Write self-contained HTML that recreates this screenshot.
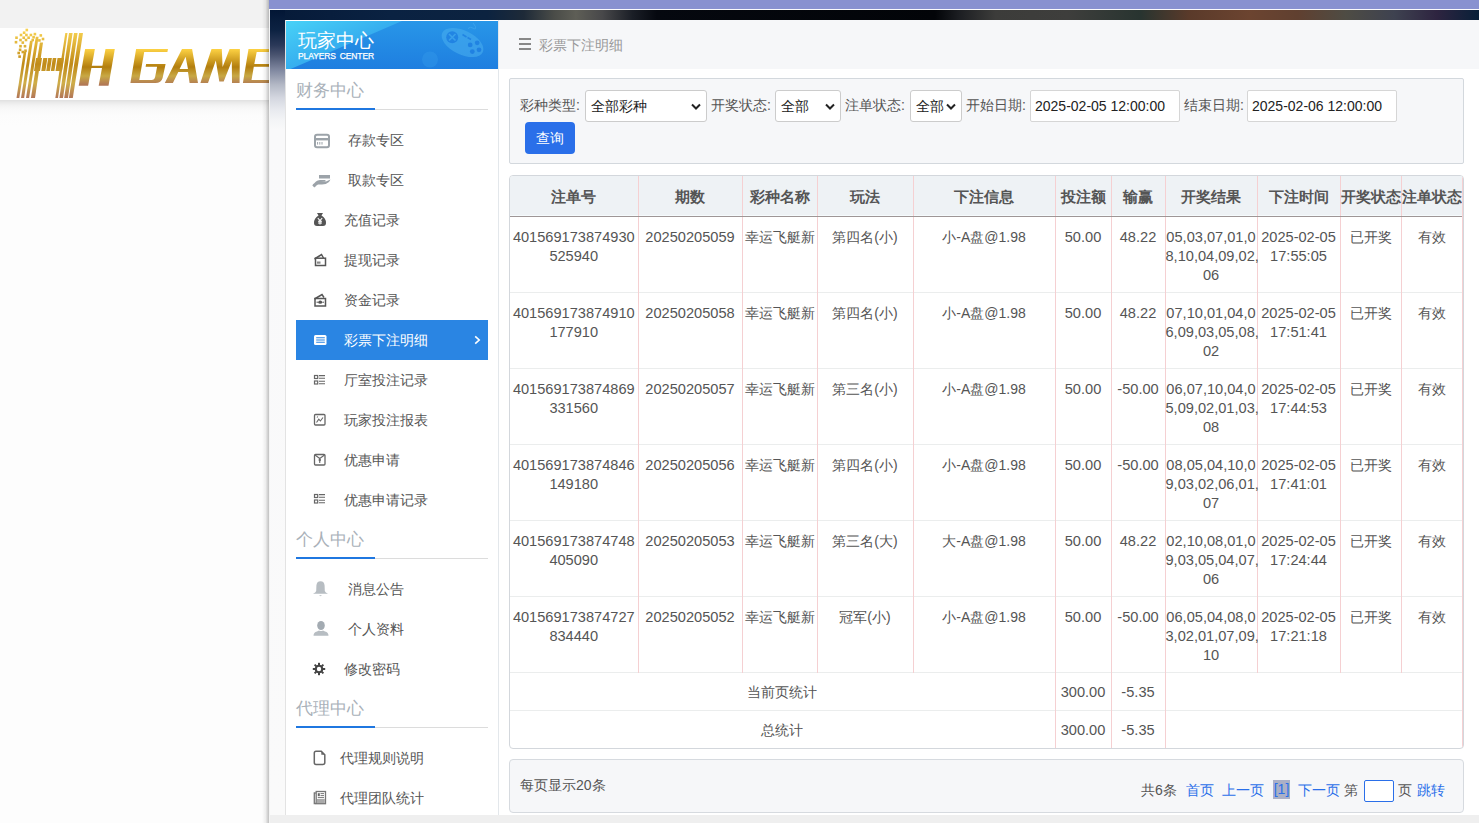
<!DOCTYPE html>
<html><head><meta charset="utf-8">
<style>
*{box-sizing:border-box;margin:0;padding:0}
html,body{width:1479px;height:823px;overflow:hidden}
body{position:relative;background:#fdfdfd;font-family:"Liberation Sans",sans-serif;font-size:14px;color:#555}
.abs{position:absolute}
/* left page */
#topband{left:0;top:0;width:270px;height:28px;background:#f2f2f2}
#logoband{left:0;top:28px;width:270px;height:72px;background:#fff}
#logoshadow{left:0;top:100px;width:270px;height:25px;background:linear-gradient(#e0e0e0 0px,#ececec 3px,#f4f4f4 6px,#f9f9f9 10px,#fcfcfc 16px,#fdfdfd 25px)}
#leftshadow{left:262px;top:0;width:7px;height:823px;background:linear-gradient(90deg,rgba(0,0,0,0),rgba(0,0,0,.06) 50%,rgba(0,0,0,.24))}
/* window */
#win{left:269px;top:0;width:1210px;height:823px;background:#f4f4f4}
#purple{left:269px;top:0;width:1210px;height:9px;background:#8891d0}
#wline{left:269px;top:9px;width:1210px;height:1px;background:#fafafc}
#dark{left:270px;top:10px;width:1209px;height:10px;background:linear-gradient(90deg,#061a38 0%,#0a2242 10%,#0c2340 18%,#1e2a38 21%,#4a4c48 23.5%,#5e5e56 25.3%,#48484a 27.5%,#1a1e26 30%,#05080f 32%,#020408 55%,#1c1e22 57%,#3c3c3a 60%,#3e3e3c 66%,#283430 72%,#5a3a2a 76%,#6c4430 81%,#604030 85%,#4e4c44 89%,#3e4250 93%,#2e2440 96.5%,#082038 100%)}
#gutter{left:270px;top:10px;width:15px;height:805px;background:linear-gradient(#021635 0px,#0c2242 20px,#2a3858 35px,#4a5470 45px,#8088a0 60px,#b4b9c6 75px,#d4d7e0 88px,#e8eaef 100px,#f3f4f6 110px,#f9f9fa 120px,#fafafa 805px)}
#bottomstrip{left:270px;top:815px;width:1209px;height:8px;background:#efefef}
/* sidebar */
#side{left:285px;top:20px;width:214px;height:795px;background:#fff;border-left:1px solid #e3e3e3;border-right:1px solid #e3e7eb}
#sidehead{left:286px;top:21px;width:212px;height:48px;background:linear-gradient(180deg,#2896e8 0%,#2288e3 60%,#1f7ee0 100%);overflow:hidden}
.sect{position:absolute;left:296px;width:192px;height:40px}
.sect .t{position:absolute;left:0;top:0;font-size:17px;color:#a9b1b9;line-height:20px}
.sect .l{position:absolute;left:0;top:28px;width:192px;height:1px;background:#dcdcdc}
.sect .b{position:absolute;left:0;top:27px;width:79px;height:2px;background:#1f77e0}
.item{position:absolute;left:296px;width:192px;height:40px;line-height:40px;font-size:14px;color:#555}
.item .ic{position:absolute;left:17px;top:12px;width:18px;height:16px}
.item .tx{position:absolute;left:48px;top:0}
.item.act{background:#2a85e3;color:#fff}
/* main */
#mhead{left:499px;top:20px;width:980px;height:49px;background:#f6f7f9}
#mbody{left:499px;top:69px;width:980px;height:746px;background:#fff}
#filter{left:509px;top:78px;width:955px;height:86px;background:#f6f7f9;border:1px solid #d3d8dd;border-radius:2px}
.lbl{position:absolute;top:97px;font-size:14px;color:#555;line-height:17px}
.sel{position:absolute;top:90px;height:32px;background:#fff;border:1px solid #ccc;border-radius:3px;color:#222;font-size:14px;line-height:30px;padding-left:5px}
.sel svg{position:absolute;right:5px;top:12px}
.inp{position:absolute;top:90px;height:32px;background:#fff;border:1px solid #d6d6d6;border-radius:2px;color:#222;font-size:14px;line-height:30px;padding-left:4px}
#btn{left:525px;top:122px;width:50px;height:32px;background:#2a6fe9;border-radius:4px;color:#fff;font-size:14px;line-height:32px;text-align:center}
/* table */
#tbl{left:509px;top:175px;width:955px;height:574px;border:1px solid #d3d7dc;border-radius:4px;overflow:hidden}
table{border-collapse:collapse;table-layout:fixed;width:953px}
td,th{text-align:center;vertical-align:top;border-left:1px solid #f5d0d2;padding:0;line-height:19px}
td:first-child,th:first-child{border-left:none}
th{height:40px;background:#eef2f5;font-weight:bold;font-size:15px;color:#555;vertical-align:middle;padding-top:2px;border-bottom:1px solid #9e9696;box-shadow:inset 0 -1px 0 #f6fbfd}
tr.r td{height:76px;border-top:1px solid #ebeded;padding-top:11px}
tr.r:first-child td{border-top:none}
tr.s td{height:38px;border-top:1px solid #ebeded;vertical-align:middle;padding-top:3px}
.n{font-size:14.6px}
/* pager */
#pager{left:509px;top:759px;width:955px;height:54px;background:#f6f7f9;border:1px solid #d6dadf;border-radius:4px}
.pg{position:absolute;top:782px;font-size:14px;line-height:17px;color:#555}
.lk{color:#2a6fe9}
</style></head><body>
<div class="abs" id="topband"></div>
<div class="abs" id="logoband"></div>
<div class="abs" id="logoshadow"></div>
<!-- logo -->
<svg class="abs" style="left:0;top:0" width="269" height="100" viewBox="0 0 269 100"><defs><linearGradient id="g1" gradientUnits="userSpaceOnUse" x1="0" y1="30" x2="0" y2="98"><stop offset="0" stop-color="#f8d250"/><stop offset="0.5" stop-color="#c08a18"/><stop offset="0.78" stop-color="#cfae48"/><stop offset="1" stop-color="#b27658"/></linearGradient>
<linearGradient id="g2" gradientUnits="userSpaceOnUse" x1="0" y1="49" x2="0" y2="85"><stop offset="0" stop-color="#fdd243"/><stop offset="0.5" stop-color="#b37e0e"/><stop offset="0.75" stop-color="#c8a844"/><stop offset="1" stop-color="#b07656"/></linearGradient></defs><g fill="url(#g1)"><polygon points="23.7,52 26.3,52 19.3,98 16.5,98"/><polygon points="30,40.8 32.8,40.8 24.1,98 21,98"/><polygon points="35.8,36.8 38.6,36.8 29.1,98 26,98"/><polygon points="39.9,42.6 43,42.6 35,98 30.9,98"/><polygon points="43.3,58 47.4,58 45.4,71 41.3,71"/><polygon points="48.2,58 51.9,58 49.9,71 46.2,71"/><polygon points="52.8,58 56.4,58 54.4,71 50.8,71"/><polygon points="36,58 42,58 40,71 34,71"/><polygon points="57.5,58 64,58 62,71 55.5,71"/><polygon points="65.3,33 67.5,33 58,98 55.3,98"/><polygon points="69,33 72.6,33 63,98 59.4,98"/><polygon points="74,33 77.6,33 68,98 64.2,98"/><polygon points="79.1,33 83,33 72.8,98 68.9,98"/><rect x="25.5" y="28.7" width="2.6" height="2.6"/><rect x="22.8" y="31.4" width="2.6" height="2.6"/><rect x="19.7" y="33.7" width="2.6" height="2.6"/><rect x="25.1" y="33.7" width="2.6" height="2.6"/><rect x="29.6" y="33.7" width="2.6" height="2.6"/><rect x="33.6" y="32.8" width="2.6" height="2.6"/><rect x="39.5" y="34.1" width="2.6" height="2.6"/><rect x="15.2" y="36.4" width="2.6" height="2.6"/><rect x="22.4" y="36.4" width="2.6" height="2.6"/><rect x="27.3" y="36.4" width="2.6" height="2.6"/><rect x="32.3" y="35.9" width="2.6" height="2.6"/><rect x="41.7" y="37.7" width="2.6" height="2.6"/><rect x="19.2" y="38.7" width="2.6" height="2.6"/><rect x="24.7" y="38.7" width="2.6" height="2.6"/><rect x="31.4" y="38.7" width="2.6" height="2.6"/><rect x="38.1" y="39.1" width="2.6" height="2.6"/><rect x="14.7" y="40.9" width="2.6" height="2.6"/><rect x="21.5" y="41.3" width="2.6" height="2.6"/><rect x="19.2" y="44.9" width="2.6" height="2.6"/><rect x="23.7" y="44.9" width="2.6" height="2.6"/><rect x="18.8" y="48.5" width="2.6" height="2.6"/><rect x="17.4" y="51.7" width="2.6" height="2.6"/><rect x="24.2" y="49.4" width="2.6" height="2.6"/><rect x="21.5" y="50.7" width="2.6" height="2.6"/><rect x="18.3" y="55.3" width="2.6" height="2.6"/></g><g fill="url(#g2)"><polygon points="85.1,49 94.9,49 88.1,85.7 78.7,85.7"/><polygon points="105.5,49 114.8,49 108.5,85.7 98.7,85.7"/><polygon points="91,65.7 109,65.7 108.6,67.9 90.6,67.9"/><path d="M136.1,49 L168,49 L167.4,52 L144.2,52 L139.3,80 L151.5,80 Q154.6,80 155.2,76.5 L157.1,66.8 L145.6,66.8 L146.1,64.1 L165.6,64.1 L162.6,78 Q161.3,83 155.3,83 L130.4,83 Z"/><path d="M164.8,83 L182,49 L192.1,49 L198,83 L189.6,83 L188,71.9 L178.3,71.9 L172.9,83 Z M185.6,56.7 L179.6,69.1 L188,69.1 Z" fill-rule="evenodd"/><polygon points="200.4,83 211.5,49 221.8,49 222.6,67 229.6,49 239.9,49 239.6,83 232,83 231.8,61 223.7,81.6 219.3,81.6 215.8,60.5 208,83"/><polygon points="248.5,49 270,49 270,52 256.7,52 254.3,64.1 270,64.1 270,66.7 253.8,66.7 251.5,80 270,80 270,83 242.9,83"/></g></svg>
<div class="abs" id="leftshadow"></div>
<div class="abs" id="win"></div>
<div class="abs" id="purple"></div>
<div class="abs" id="wline"></div>
<div class="abs" id="dark"></div>
<div class="abs" id="gutter"></div>
<div class="abs" id="bottomstrip"></div>

<!-- SIDEBAR -->
<div class="abs" id="side"></div>
<div class="abs" id="sidehead">
 <svg style="position:absolute;left:0;top:0" width="212" height="48" viewBox="0 0 212 48"><defs><linearGradient id="hb" x1="0" y1="0" x2="1" y2="1"><stop offset="0" stop-color="#48d2f7"/><stop offset="0.55" stop-color="#34aaee"/><stop offset="1" stop-color="#2c9aea"/></linearGradient></defs><polygon points="0,0 116,0 0,50" fill="url(#hb)"/></svg>
 <svg style="position:absolute;left:0;top:0" width="212" height="48" viewBox="286 21 212 48"><g opacity="0.55"><ellipse cx="462.5" cy="42.5" rx="22.5" ry="12" transform="rotate(26 462.5 42.5)" fill="#4ab0f0"/><circle cx="452.2" cy="37.3" r="6" fill="#1f7de2"/><path d="M449 34 L455.5 40.5 M455.5 34 L449 40.5" stroke="#4ab0f0" stroke-width="1.6"/><circle cx="470.2" cy="44.9" r="2.4" fill="#1f7de2"/><circle cx="477.2" cy="42.8" r="2.4" fill="#1f7de2"/><circle cx="472.3" cy="51.6" r="2.4" fill="#1f7de2"/><circle cx="479" cy="49.8" r="2.4" fill="#1f7de2"/><path d="M462.5 34.5 L466.5 37 M467.5 37.5 L471 39.5" stroke="#1f7de2" stroke-width="1.6"/><path d="M468 28.5 Q470 26 474 28.5 Q476 30 475.5 26.5 L473 23" fill="none" stroke="#4ab0f0" stroke-width="1"/><circle cx="430" cy="59.5" r="8" fill="#3aa2ee" opacity="0.6"/></g></svg>
 <div style="position:absolute;left:12px;top:9px;color:#fff;font-size:19px;line-height:22px">玩家中心</div>
 <div style="position:absolute;left:12px;top:30px;color:#fff;font-size:8.5px;font-weight:normal;-webkit-text-stroke:0.25px #fff;line-height:10px;letter-spacing:-0.1px;word-spacing:1.5px">PLAYERS CENTER</div>
</div>
<div class="sect" style="top:81px"><div class="t">财务中心</div><div class="l"></div><div class="b"></div></div>
<div class="item" style="top:120px"><span class="ic"></span><span class="tx" style="left:52px">存款专区</span></div>
<div class="item" style="top:160px"><span class="ic"></span><span class="tx" style="left:52px">取款专区</span></div>
<div class="item" style="top:200px"><span class="ic"></span><span class="tx">充值记录</span></div>
<div class="item" style="top:240px"><span class="ic"></span><span class="tx">提现记录</span></div>
<div class="item" style="top:280px"><span class="ic"></span><span class="tx">资金记录</span></div>
<div class="item act" style="top:320px"><span class="ic"></span><span class="tx">彩票下注明细</span><svg style="position:absolute;left:178px;top:15px" width="7" height="11" viewBox="0 0 7 11"><path d="M1.2 1.3 L5.2 5 L1.2 8.7" fill="none" stroke="#fff" stroke-width="1.6"/></svg></div>
<div class="item" style="top:360px"><span class="ic"></span><span class="tx">厅室投注记录</span></div>
<div class="item" style="top:400px"><span class="ic"></span><span class="tx">玩家投注报表</span></div>
<div class="item" style="top:440px"><span class="ic"></span><span class="tx">优惠申请</span></div>
<div class="item" style="top:480px"><span class="ic"></span><span class="tx">优惠申请记录</span></div>
<div class="sect" style="top:530px"><div class="t">个人中心</div><div class="l"></div><div class="b"></div></div>
<div class="item" style="top:569px"><span class="ic"></span><span class="tx" style="left:52px">消息公告</span></div>
<div class="item" style="top:609px"><span class="ic"></span><span class="tx" style="left:52px">个人资料</span></div>
<div class="item" style="top:649px"><span class="ic"></span><span class="tx">修改密码</span></div>
<div class="sect" style="top:699px"><div class="t">代理中心</div><div class="l"></div><div class="b"></div></div>
<div class="item" style="top:738px"><span class="ic"></span><span class="tx" style="left:44px">代理规则说明</span></div>
<div class="item" style="top:778px"><span class="ic"></span><span class="tx" style="left:44px">代理团队统计</span></div>

<!-- icons -->
<svg class="abs" style="left:313px;top:133px" width="18" height="16" viewBox="0 0 18 16"><rect x="2" y="1.8" width="14" height="12.4" rx="2" fill="none" stroke="#9ca3a9" stroke-width="2"/><rect x="2" y="5" width="14" height="2.4" fill="#9ca3a9"/><path d="M4.6 9v2.6M6.8 9v2.6M9 9v2.6" stroke="#9ca3a9" stroke-width="1"/></svg>
<svg class="abs" style="left:312px;top:174px" width="20" height="14" viewBox="0 0 20 14"><rect x="7" y="1" width="11" height="3.5" fill="#9ca3a9"/><path d="M1 10.5 L4 7.5 Q5.5 6 8 6 L13 6 Q14 6.2 13.5 7.2 L9 7.5 L14 7.5 L18.5 5.5 L17 8 Q14 10.5 10 10.5 L6 10.5 L3 12.5 Z" fill="#9ca3a9"/><path d="M1 10.5 L3 12.8" stroke="#9ca3a9" stroke-width="2"/></svg>
<svg class="abs" style="left:313px;top:212px" width="14" height="15" viewBox="0 0 14 15"><path d="M4 1 L10 1 L8.5 3.5 Q13 6 13 11 Q13 14 10 14 L4 14 Q1 14 1 11 Q1 6 5.5 3.5 Z" fill="#555"/><path d="M4.8 6 L7 8.6 L9.2 6 M7 8.6 V12.5 M5 9.3 H9 M5 11 H9" stroke="#fff" stroke-width="1.1" fill="none"/></svg>
<svg class="abs" style="left:313px;top:253px" width="14" height="14" viewBox="0 0 14 14"><path d="M1.5 6 L8.5 1.5 L10.5 5" fill="none" stroke="#555" stroke-width="1.5"/><rect x="2.5" y="5.2" width="10" height="7.3" fill="none" stroke="#555" stroke-width="1.5"/><rect x="4" y="8.5" width="3.5" height="2.2" fill="#888"/></svg>
<svg class="abs" style="left:313px;top:293px" width="14" height="14" viewBox="0 0 14 14"><path d="M1.5 6 L9 1.5 L11 4.5" fill="none" stroke="#555" stroke-width="1.5"/><rect x="2" y="5.5" width="10.5" height="7.5" fill="none" stroke="#555" stroke-width="1.5"/><ellipse cx="7.2" cy="9.2" rx="2" ry="1.6" fill="#555"/><path d="M3.5 9.2h1.5M9.5 9.2h1.5" stroke="#555" stroke-width="1"/></svg>
<svg class="abs" style="left:313px;top:334px" width="14" height="12" viewBox="0 0 14 12"><rect x="1" y="1" width="12.5" height="10" rx="1.5" fill="#fff"/><path d="M3.2 3.7H11.8M3.2 6H11.8M3.2 8.3H11.8" stroke="#2a85e3" stroke-width="1.1"/></svg>
<svg class="abs" style="left:313px;top:374px" width="13" height="12" viewBox="0 0 13 12"><rect x="1.5" y="1.5" width="3.2" height="3" fill="none" stroke="#666" stroke-width="1.2"/><rect x="1.5" y="7" width="3.2" height="3" fill="none" stroke="#666" stroke-width="1.2"/><path d="M6 1.6H12M6 4.2H12M6 7.2H12M6 9.8H12" stroke="#666" stroke-width="1.1"/></svg>
<svg class="abs" style="left:313px;top:413px" width="13" height="13" viewBox="0 0 13 13"><rect x="1.5" y="1.5" width="10.5" height="10.5" rx="1" fill="none" stroke="#666" stroke-width="1.3"/><path d="M3.5 9.5 L5.8 6.2 L7.4 8 L10 4.5 M4 4.5 L4.8 3.5" fill="none" stroke="#666" stroke-width="1.1"/></svg>
<svg class="abs" style="left:313px;top:453px" width="13" height="13" viewBox="0 0 13 13"><rect x="1.5" y="1.5" width="10.5" height="10.5" rx="1" fill="none" stroke="#666" stroke-width="1.3"/><path d="M2 2 L6.75 5.5 L11.5 2 M6.75 5.5 V10" fill="none" stroke="#666" stroke-width="1.1"/><circle cx="6.75" cy="7" r="1.2" fill="#666"/></svg>
<svg class="abs" style="left:313px;top:493px" width="13" height="12" viewBox="0 0 13 12"><rect x="1.5" y="1.5" width="3.2" height="3" fill="none" stroke="#666" stroke-width="1.2"/><rect x="1.5" y="7" width="3.2" height="3" fill="none" stroke="#666" stroke-width="1.2"/><path d="M6 1.6H12M6 4.2H12M6 7.2H12M6 9.8H12" stroke="#666" stroke-width="1.1"/></svg>
<svg class="abs" style="left:312px;top:580px" width="17" height="17" viewBox="0 0 17 17"><path d="M8.5 1.2 Q12.3 1.2 12.6 5.5 L12.8 11 Q13.2 12.6 16 13.8 L1 13.8 Q3.8 12.6 4.2 11 L4.4 5.5 Q4.7 1.2 8.5 1.2 Z" fill="#b7bdc2"/><path d="M7 15.2 H10 L8.5 16.2Z" fill="#b7bdc2"/></svg>
<svg class="abs" style="left:312px;top:620px" width="18" height="17" viewBox="0 0 18 17"><ellipse cx="9" cy="5.5" rx="3.8" ry="4.6" fill="#a3abb2"/><path d="M1.5 15.8 Q1.5 12.3 5 11.5 L7 10.5 Q9 11.5 11 10.5 L13 11.5 Q16.5 12.3 16.5 15.8 Z" fill="#b7bdc2"/></svg>
<svg class="abs" style="left:312px;top:662px" width="14" height="14" viewBox="0 0 14 14"><g fill="#444"><circle cx="7" cy="7" r="4.3"/><rect x="6" y="0.8" width="2" height="12.4"/><rect x="0.8" y="6" width="12.4" height="2"/><rect x="6" y="0.8" width="2" height="12.4" transform="rotate(45 7 7)"/><rect x="6" y="0.8" width="2" height="12.4" transform="rotate(-45 7 7)"/></g><circle cx="7" cy="7" r="2.2" fill="#fff"/></svg>
<svg class="abs" style="left:313px;top:750px" width="13" height="16" viewBox="0 0 13 16"><path d="M3 1.3 H8.3 L11.8 4.8 V12.5 Q11.8 14.5 9.8 14.5 H3 Q1.3 14.5 1.3 12.5 V3 Q1.3 1.3 3 1.3 Z" fill="#fff" stroke="#666" stroke-width="1.5"/><path d="M8.3 1.3 V4.8 H11.8 Z" fill="#666"/></svg>
<svg class="abs" style="left:313px;top:790px" width="14" height="15" viewBox="0 0 14 15"><path d="M2.8 3 H1.3 V13.5 H3" fill="none" stroke="#777" stroke-width="1.3"/><rect x="3.2" y="1.5" width="9.3" height="12.2" fill="#fff" stroke="#777" stroke-width="1.3"/><rect x="4.8" y="3.2" width="2" height="3" fill="#666"/><path d="M7.5 3.6H11M7.5 5.6H11M4.8 7.6H11" stroke="#777" stroke-width="1"/><rect x="4" y="9" width="7.8" height="4" fill="#aaa"/></svg>

<!-- MAIN -->
<div class="abs" id="mhead">
 <div style="position:absolute;left:20px;top:18px;width:12px;height:12px;border-top:2px solid #888;border-bottom:2px solid #888"><div style="margin-top:3px;height:2px;background:#888"></div></div>
 <div style="position:absolute;left:40px;top:17px;color:#999;font-size:14px;line-height:17px">彩票下注明细</div>
</div>
<div class="abs" id="mbody"></div>
<div class="abs" id="filter"></div>
<div class="lbl" style="left:520px">彩种类型:</div>
<div class="sel" style="left:585px;width:122px">全部彩种<svg width="10" height="7" viewBox="0 0 10 7"><path d="M1 1.5L5 5.5L9 1.5" fill="none" stroke="#222" stroke-width="2"/></svg></div>
<div class="lbl" style="left:711px">开奖状态:</div>
<div class="sel" style="left:775px;width:66px">全部<svg width="10" height="7" viewBox="0 0 10 7"><path d="M1 1.5L5 5.5L9 1.5" fill="none" stroke="#222" stroke-width="2"/></svg></div>
<div class="lbl" style="left:845px">注单状态:</div>
<div class="sel" style="left:910px;width:52px">全部<svg width="10" height="7" viewBox="0 0 10 7"><path d="M1 1.5L5 5.5L9 1.5" fill="none" stroke="#222" stroke-width="2"/></svg></div>
<div class="lbl" style="left:966px">开始日期:</div>
<div class="inp" style="left:1030px;width:150px">2025-02-05 12:00:00</div>
<div class="lbl" style="left:1184px">结束日期:</div>
<div class="inp" style="left:1247px;width:150px">2025-02-06 12:00:00</div>
<div class="abs" id="btn">查询</div>

<div class="abs" id="tbl">
<div style="position:absolute;left:952px;top:0;width:1px;height:572px;background:#f5d0d2"></div>
<table>
<colgroup><col style="width:128px"><col style="width:104px"><col style="width:75px"><col style="width:96px"><col style="width:142px"><col style="width:56px"><col style="width:54px"><col style="width:92px"><col style="width:83px"><col style="width:61px"><col style="width:62px"></colgroup>
<tr><th>注单号</th><th>期数</th><th>彩种名称</th><th>玩法</th><th>下注信息</th><th>投注额</th><th>输赢</th><th>开奖结果</th><th>下注时间</th><th style="white-space:nowrap">开奖状态</th><th style="white-space:nowrap">注单状态</th></tr>
<tr class="r"><td class="n">401569173874930<br>525940</td><td class="n">20250205059</td><td>幸运飞艇新</td><td>第四名(小)</td><td>小-A盘@1.98</td><td class="n">50.00</td><td class="n">48.22</td><td class="n">05,03,07,01,0<br>8,10,04,09,02,<br>06</td><td class="n">2025-02-05<br>17:55:05</td><td>已开奖</td><td>有效</td></tr>
<tr class="r"><td class="n">401569173874910<br>177910</td><td class="n">20250205058</td><td>幸运飞艇新</td><td>第四名(小)</td><td>小-A盘@1.98</td><td class="n">50.00</td><td class="n">48.22</td><td class="n">07,10,01,04,0<br>6,09,03,05,08,<br>02</td><td class="n">2025-02-05<br>17:51:41</td><td>已开奖</td><td>有效</td></tr>
<tr class="r"><td class="n">401569173874869<br>331560</td><td class="n">20250205057</td><td>幸运飞艇新</td><td>第三名(小)</td><td>小-A盘@1.98</td><td class="n">50.00</td><td class="n">-50.00</td><td class="n">06,07,10,04,0<br>5,09,02,01,03,<br>08</td><td class="n">2025-02-05<br>17:44:53</td><td>已开奖</td><td>有效</td></tr>
<tr class="r"><td class="n">401569173874846<br>149180</td><td class="n">20250205056</td><td>幸运飞艇新</td><td>第四名(小)</td><td>小-A盘@1.98</td><td class="n">50.00</td><td class="n">-50.00</td><td class="n">08,05,04,10,0<br>9,03,02,06,01,<br>07</td><td class="n">2025-02-05<br>17:41:01</td><td>已开奖</td><td>有效</td></tr>
<tr class="r"><td class="n">401569173874748<br>405090</td><td class="n">20250205053</td><td>幸运飞艇新</td><td>第三名(大)</td><td>大-A盘@1.98</td><td class="n">50.00</td><td class="n">48.22</td><td class="n">02,10,08,01,0<br>9,03,05,04,07,<br>06</td><td class="n">2025-02-05<br>17:24:44</td><td>已开奖</td><td>有效</td></tr>
<tr class="r"><td class="n">401569173874727<br>834440</td><td class="n">20250205052</td><td>幸运飞艇新</td><td>冠军(小)</td><td>小-A盘@1.98</td><td class="n">50.00</td><td class="n">-50.00</td><td class="n">06,05,04,08,0<br>3,02,01,07,09,<br>10</td><td class="n">2025-02-05<br>17:21:18</td><td>已开奖</td><td>有效</td></tr>
<tr class="s"><td colspan="5">当前页统计</td><td class="n">300.00</td><td class="n">-5.35</td><td colspan="4"></td></tr>
<tr class="s"><td colspan="5">总统计</td><td class="n">300.00</td><td class="n">-5.35</td><td colspan="4"></td></tr>
</table>
</div>

<div class="abs" id="pager"></div>
<div class="pg" style="left:520px;top:777px">每页显示20条</div>
<div class="pg" style="left:1141px">共6条</div>
<div class="pg lk" style="left:1186px">首页</div>
<div class="pg lk" style="left:1222px">上一页</div>
<div class="pg lk" style="left:1273px;top:780px;width:17px;height:19px;line-height:19px;background:#abb0c6;text-align:center">[1]</div>
<div class="pg lk" style="left:1298px">下一页</div>
<div class="pg" style="left:1344px">第</div>
<div class="abs" style="left:1364px;top:780px;width:30px;height:22px;border:1.5px solid #2a6fe9;border-radius:2px;background:#fff"></div>
<div class="pg" style="left:1398px">页</div>
<div class="pg lk" style="left:1417px">跳转</div>
</body></html>
